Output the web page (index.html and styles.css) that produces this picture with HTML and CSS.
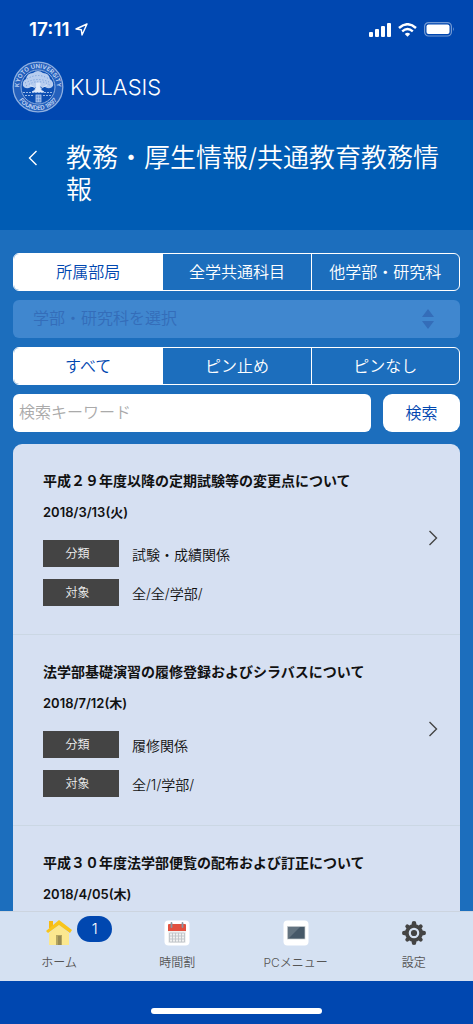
FILE: index.html
```html
<!DOCTYPE html>
<html lang="ja">
<head>
    <meta charset="UTF-8">
    <meta name="viewport" content="width=device-width, initial-scale=1.0">
    <title>KULASIS</title>
    <link rel="stylesheet" href="styles.css">
</head>
<body>
    <div class="status-bar">
        <div class="status-time">
            <span>17:11</span>
            <svg width="13" height="13" viewBox="0 0 13 13"><path d="M12 1 L1 6 L6.3 6.7 L7 12 Z" fill="none" stroke="#fff" stroke-width="1.4" stroke-linejoin="round"/></svg>
        </div>
        <div class="status-icons">
            <svg width="22" height="14" viewBox="0 0 22 14" fill="#fff">
                <rect x="0" y="9" width="4" height="5" rx="1"/>
                <rect x="6" y="6" width="4" height="8" rx="1"/>
                <rect x="12" y="3" width="4" height="11" rx="1"/>
                <rect x="18" y="0" width="4" height="14" rx="1"/>
            </svg>
            <svg width="19" height="14" viewBox="0 0 19 14">
                <path d="M1 5 Q9.500 -2.500 18 5" fill="none" stroke="#fff" stroke-width="2.500"/>
                <path d="M4.200 8.300 Q9.500 3.700 14.800 8.300" fill="none" stroke="#fff" stroke-width="2.400"/>
                <path d="M6.800 11 Q9.500 8.600 12.200 11 L9.500 13.800 Z" fill="#fff"/>
            </svg>
            <svg width="31" height="15" viewBox="0 0 31 15">
                <rect x="0.600" y="0.600" width="26.800" height="13.400" rx="4" fill="none" stroke="#fff" stroke-opacity="0.450" stroke-width="1.200"/>
                <rect x="2.500" y="2.500" width="23" height="9.600" rx="2" fill="#fff"/>
                <path d="M29 5 Q30.800 7.300 29 9.600 Z" fill="#fff" fill-opacity="0.500"/>
            </svg>
        </div>
    </div>

    <header class="header">
        <svg class="emblem" width="52" height="52" viewBox="0 0 52 52">
            <defs>
                <path id="ring-top" d="M7.200 26 A18.800 18.800 0 0 1 44.800 26"/>
                <path id="ring-bottom" d="M3 26 A23 23 0 0 0 49 26"/>
            </defs>
            <circle cx="26" cy="26" r="24.800" fill="#2460bc" stroke="#8eafe0" stroke-width="1.300"/>
            <circle cx="26" cy="26" r="17" fill="#0d4fb3" stroke="#8eafe0" stroke-width="1"/>
            <text class="emblem-text"><textPath href="#ring-top" startOffset="50%">KYOTO UNIVERSITY</textPath></text>
            <text class="emblem-text"><textPath href="#ring-bottom" startOffset="50%">FOUNDED 1897</textPath></text>
            <path d="M11 25 Q10 20 14 18 Q15 12 21 12 Q26 8 31 12 Q37 12 38 18 Q42 21 41 25 Q38 29 33 26 L29 26 L27 24 L25 26 L19 26 Q14 29 11 25 Z" fill="#b7cdef"/>
            <path d="M13 22 Q26 15 39 22 M15 18 Q26 11 37 18 M14 25 Q22 20 26 21 Q33 20 39 25" fill="none" stroke="#5c8bd3" stroke-width="0.800" stroke-dasharray="1 2"/>
            <path d="M24.500 22 L28 22 Q27 29 32 31 L20 31 Q25 29 24.500 22 Z M18 24 L25 28 M35 24 L28 28" fill="#e0eafa" stroke="#e0eafa" stroke-width="0.800"/>
            <path d="M11 31.500 H41 M13 34.500 H22 M31 34.500 H39" stroke="#9bb9e6" stroke-width="1.200" fill="none" stroke-dasharray="2 1"/>
            <rect x="24" y="34" width="5" height="7" fill="#6d97da" stroke="#b7cdef" stroke-width="0.800"/>
            <path d="M26.500 34 V41 M24 37.500 H29" stroke="#b7cdef" stroke-width="0.600"/>
        </svg>
        <span class="app-name">KULASIS</span>
    </header>

    <div class="page-title">
        <button class="back" type="button" aria-label="戻る">
            <svg width="10" height="16" viewBox="0 0 10 16"><path d="M8.500 1 L1.500 8 L8.500 15" fill="none" stroke="#fff" stroke-width="1.400"/></svg>
        </button>
        <h1>教務・厚生情報/共通教育教務情報</h1>
    </div>

    <main class="content">
        <form class="filters">
            <div class="segment">
                <button type="button" class="active">所属部局</button>
                <button type="button">全学共通科目</button>
                <button type="button">他学部・研究科</button>
            </div>
            <div class="select-box">
                <select aria-label="学部・研究科" disabled>
                    <option>学部・研究科を選択</option>
                </select>
                <svg class="select-arrows" width="12" height="20" viewBox="0 0 12 20" fill="#346db9"><path d="M6 0 L12 8 H0 Z M0 12 H12 L6 20 Z"/></svg>
            </div>
            <div class="segment">
                <button type="button" class="active">すべて</button>
                <button type="button">ピン止め</button>
                <button type="button">ピンなし</button>
            </div>
            <div class="search">
                <input type="text" placeholder="検索キーワード" aria-label="検索キーワード">
                <button type="button">検索</button>
            </div>
        </form>

        <ul class="news">
            <li class="news-item">
                <div class="news-body">
                    <h2>平成２９年度以降の定期試験等の変更点について</h2>
                    <p class="date">2018/3/13(火)</p>
                    <dl>
                        <dt>分類</dt>
                        <dd>試験・成績関係</dd>
                        <dt>対象</dt>
                        <dd>全/全/学部/</dd>
                    </dl>
                </div>
                <svg width="10" height="16" viewBox="0 0 10 16"><path d="M1.500 1 L8.500 8 L1.500 15" fill="none" stroke="#444" stroke-width="1.400"/></svg>
            </li>
            <li class="news-item">
                <div class="news-body">
                    <h2>法学部基礎演習の履修登録およびシラバスについて</h2>
                    <p class="date">2018/7/12(木)</p>
                    <dl>
                        <dt>分類</dt>
                        <dd>履修関係</dd>
                        <dt>対象</dt>
                        <dd>全/1/学部/</dd>
                    </dl>
                </div>
                <svg width="10" height="16" viewBox="0 0 10 16"><path d="M1.500 1 L8.500 8 L1.500 15" fill="none" stroke="#444" stroke-width="1.400"/></svg>
            </li>
            <li class="news-item">
                <div class="news-body">
                    <h2>平成３０年度法学部便覧の配布および訂正について</h2>
                    <p class="date">2018/4/05(木)</p>
                </div>
            </li>
        </ul>
    </main>

    <nav class="tab-bar">
        <a href="#home">
            <span class="tab-icon">
                <svg width="26" height="26" viewBox="0 0 26 26">
                    <path d="M3 1 H7 V8 H3 Z" fill="#f6b912"/>
                    <path d="M3 13 L13 5 L23 13 V25 H3 Z" fill="#fbe88f"/>
                    <rect x="10" y="15" width="6" height="10" fill="#b5a661"/>
                    <rect x="12" y="16" width="3" height="9" fill="#978b55"/>
                    <path d="M13 0 L26 10 L24 13 L13 5 L2 13 L0 11 Z" fill="#f8c51b"/>
                </svg>
                <span class="count">1</span>
            </span>
            <span>ホーム</span>
        </a>
        <a href="#timetable">
            <span class="tab-icon">
                <svg width="26" height="26" viewBox="0 0 26 26">
                    <rect x="0.500" y="0.500" width="25" height="25" rx="4" fill="#fff"/>
                    <rect x="4" y="5" width="18" height="18" rx="1" fill="#f0f1f1"/>
                    <path d="M4 11 V5 Q4 4 5 4 H21 Q22 4 22 5 V11 Z" fill="#e2503f"/>
                    <path d="M5.500 13 H20.500 M5.500 16 H20.500 M5.500 19 H20.500 M5.500 22 H20.500 M5.500 13 V22 M8.500 13 V22 M11.500 13 V22 M14.500 13 V22 M17.500 13 V22 M20.500 13 V22" stroke="#bec3c7" stroke-width="0.900"/>
                    <path d="M7.500 3 V7 M18.500 3 V7" stroke="#8996a0" stroke-width="1.800" stroke-linecap="round"/>
                </svg>
            </span>
            <span>時間割</span>
        </a>
        <a href="#pc">
            <span class="tab-icon">
                <svg width="26" height="26" viewBox="0 0 26 26">
                    <rect x="0.500" y="0.500" width="25" height="25" rx="4" fill="#fff"/>
                    <rect x="4.500" y="6.500" width="17.500" height="12.500" fill="#465868" stroke="#c9ced2" stroke-width="0.700"/>
                    <path d="M5 7 H17 L6 18 H5 Z" fill="#637380"/>
                </svg>
            </span>
            <span>PCメニュー</span>
        </a>
        <a href="#settings">
            <span class="tab-icon">
                <svg width="26" height="26" viewBox="0 0 26 26">
                    <g stroke="#444" stroke-width="4.600" stroke-linecap="round">
                        <path d="M13 3.300 V22.700 M3.300 13 H22.700"/>
                        <path d="M6.300 6.300 L19.700 19.700 M19.700 6.300 L6.300 19.700" stroke-width="4"/>
                    </g>
                    <circle cx="13" cy="13" r="9" fill="#444"/>
                    <circle cx="13" cy="13" r="4.200" fill="#444" stroke="#d5e1f2" stroke-width="2.200"/>
                </svg>
            </span>
            <span>設定</span>
        </a>
    </nav>
    <div class="home-area"><div class="home-bar"></div></div>
</body>
</html>
```
FILE: styles.css
```css
* {
    box-sizing: border-box;
}
body {
    margin: 0;
    height: 100vh;
    display: flex;
    flex-direction: column;
    background-color: #0047b0;
    color: #111;
    font-family: Inter, "Noto Sans CJK JP", sans-serif;
}
h1, h2, p, ul, dl, dd {
    margin: 0;
    padding: 0;
    font-weight: normal;
}
button, input, select {
    font: inherit;
    margin: 0;
    padding: 0;
    border: none;
}
svg {
    display: block;
    flex: none;
}

/* status bar */
.status-bar {
    display: flex;
    justify-content: space-between;
    align-items: center;
    height: 59px;
    padding: 0 18px 0 29px;
    color: #fff;
    flex: none;
}
.status-time, .status-icons {
    display: flex;
    align-items: center;
}
.status-time {
    gap: 6px;
    font-size: 19px;
    font-weight: 600;
}
.status-icons {
    gap: 7px;
}

/* header */
.header {
    display: flex;
    align-items: center;
    gap: 6px;
    height: 61px;
    padding: 0 12px 6px;
    color: #fff;
    flex: none;
}
.emblem-text {
    font-size: 6px;
    font-weight: 600;
    fill: #c6d8f4;
    text-anchor: middle;
}
.app-name {
    font-size: 22px;
    font-weight: 350;
}
.page-title {
    display: flex;
    align-items: flex-start;
    gap: 28px;
    min-height: 110px;
    padding: 22px 28px;
    background-color: #005cb4;
    color: #fff;
    flex: none;
}
.page-title h1 {
    font-size: 26px;
    font-weight: 350;
    line-height: 32px;
}
.back {
    height: 32px;
    background: none;
}

/* filters */
.content {
    flex: 1;
    min-height: 0;
    display: flex;
    flex-direction: column;
    gap: 12px;
    padding: 23px 13px 0;
    overflow: auto;
    scrollbar-width: none;
    background-color: #1c6ebd;
}
.filters {
    display: flex;
    flex-direction: column;
    gap: 9px;
    font-size: 16px;
    font-weight: 350;
}
.segment {
    display: grid;
    grid-template-columns: repeat(3, 1fr);
    height: 38px;
    border: 1px solid #fff;
    border-radius: 6px;
    overflow: hidden;
}
.segment button {
    padding-bottom: 3px;
    background: none;
    color: #fff;
}
.segment button + button {
    border-left: 1px solid #fff;
}
.segment .active {
    background-color: #fff;
    color: #0047b0;
}
.select-box {
    position: relative;
}
.select-box select {
    display: block;
    width: 100%;
    height: 38px;
    padding: 0 20px 2px;
    border-radius: 6px;
    background-color: #4087cf;
    color: #346db9;
    opacity: 1;
    appearance: none;
}
.select-arrows {
    position: absolute;
    right: 26px;
    top: 9px;
}
.search {
    display: flex;
    gap: 12px;
}
.search input {
    flex: 1;
    min-width: 0;
    height: 38px;
    padding: 0 6px 2px;
    border-radius: 6px;
    background-color: #fff;
}
.search input::placeholder {
    color: #aaa;
}
.search button {
    width: 77px;
    padding-bottom: 2px;
    border-radius: 9px;
    background-color: #fff;
    color: #0047b0;
}

/* news list */
.news {
    flex: 1 0 auto;
    list-style: none;
    border-radius: 9px 9px 0 0;
    background-color: #d6e0f2;
}
.news-item {
    display: flex;
    align-items: center;
    justify-content: space-between;
    padding: 26px 22px 28px 30px;
    border-bottom: 1px solid #cbd7e4;
}
.news-item:last-child {
    border-bottom: none;
    padding-bottom: 0;
}
.news h2 {
    font-size: 14px;
    font-weight: 600;
    line-height: 22px;
}
.date {
    margin-top: 10px;
    font-size: 13px;
    font-weight: 600;
    line-height: 20px;
}
.news dl {
    display: grid;
    grid-template-columns: 76px auto;
    gap: 12px 13px;
    margin-top: 18px;
}
.news dt {
    padding-right: 7px;
    background-color: #444;
    color: #eee;
    font-size: 12px;
    font-weight: 350;
    line-height: 27px;
    text-align: center;
}
.news dd {
    padding-top: 3px;
    font-size: 14px;
    font-weight: 350;
    line-height: 24px;
}

/* bottom tabs */
.tab-bar {
    display: grid;
    grid-template-columns: repeat(4, 1fr);
    height: 70px;
    border-top: 1px solid #ccd4df;
    background-color: #d5e1f2;
    flex: none;
}
.tab-bar a {
    display: flex;
    flex-direction: column;
    align-items: center;
    gap: 8px;
    padding-top: 8px;
    color: #555;
    font-size: 12px;
    font-weight: 350;
    line-height: 18px;
    text-decoration: none;
}
.tab-icon {
    position: relative;
}
.count {
    position: absolute;
    left: 31px;
    top: -4px;
    width: 35px;
    border-radius: 13px;
    background-color: #0047b0;
    color: #fff;
    font-size: 15px;
    line-height: 26px;
    text-align: center;
}
.home-area {
    display: flex;
    justify-content: center;
    height: 43px;
    padding-top: 27px;
    flex: none;
}
.home-bar {
    width: 36%;
    height: 6px;
    border-radius: 3px;
    background-color: #fff;
}
```
